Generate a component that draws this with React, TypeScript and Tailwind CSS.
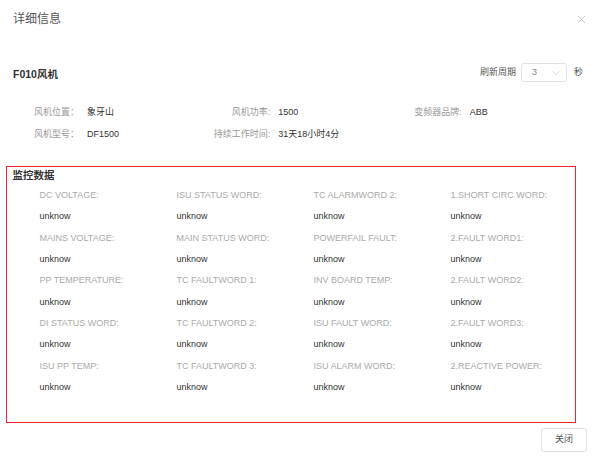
import { ChevronDown, X } from "lucide-react";

const FONT = "font-['Liberation_Sans','Noto_Sans_CJK_SC',sans-serif]";

const BASE_INFO = [
  [
    { label: "风机位置：", value: "象牙山" },
    { label: "风机功率:", value: "1500" },
    { label: "变频器品牌:", value: "ABB" },
  ],
  [
    { label: "风机型号：", value: "DF1500" },
    { label: "持续工作时间:", value: "31天18小时4分" },
    { label: "", value: "" },
  ],
];

const MONITOR_FIELDS = [
  "DC VOLTAGE:",
  "ISU STATUS WORD:",
  "TC ALARMWORD 2:",
  "1.SHORT CIRC WORD:",
  "MAINS VOLTAGE:",
  "MAIN STATUS WORD:",
  "POWERFAIL FAULT:",
  "2.FAULT WORD1:",
  "PP TEMPERATURE:",
  "TC FAULTWORD 1:",
  "INV BOARD TEMP:",
  "2.FAULT WORD2:",
  "DI STATUS WORD:",
  "TC FAULTWORD 2:",
  "ISU FAULT WORD:",
  "2.FAULT WORD3:",
  "ISU PP TEMP:",
  "TC FAULTWORD 3:",
  "ISU ALARM WORD:",
  "2.REACTIVE POWER:",
];

export default function App() {
  return (
    <div className={`${FONT} w-[600px] h-[463px] bg-white flex flex-col text-[#333]`}>
      {/* Header */}
      <div className="h-[38px] flex items-center justify-between pl-[13px] pr-[12px]">
        <span className="text-[12px] leading-none text-[#555]">详细信息</span>
        <X size={13} strokeWidth={1.2} className="text-[#aaa]" />
      </div>

      {/* Fan name + refresh period */}
      <div className="mt-[25px] h-[19px] flex items-center justify-between pl-[13px] pr-[17px]">
        <span className="text-[10.5px] font-bold leading-none mt-[3px]">F010风机</span>
        <div className="flex items-center text-[9px] text-[#555]">
          <span>刷新周期</span>
          <div className="ml-[5px] w-[46px] h-[19px] border border-[#e3e3e3] rounded-[3px] flex items-center justify-between pl-[10px] pr-[4px]">
            <span className="text-[#888]">3</span>
            <ChevronDown size={12} strokeWidth={1.2} className="text-[#bbb]" />
          </div>
          <span className="ml-[7px]">秒</span>
        </div>
      </div>

      {/* Base info */}
      <div className="mt-[20px] mx-[13px] grid grid-cols-3 text-[9px]">
        {BASE_INFO.flat().map((item, i) => (
          <div key={i} className="h-[22px] flex items-center">
            <span className="w-[66px] shrink-0 text-right text-[#999] whitespace-nowrap">{item.label}</span>
            <span className="ml-[8px] whitespace-nowrap">{item.value}</span>
          </div>
        ))}
      </div>

      {/* Monitor data */}
      <div className="mt-[20px] ml-[6px] w-[570px] h-[257px] border-[1.5px] border-[#f5222d] pl-[5.5px]">
        <div className="h-[16px] flex items-center text-[10.5px] font-bold leading-none">监控数据</div>
        <div className="mt-[2px] ml-[27px] grid grid-cols-[137px_137px_137px_137px] text-[9px]">
          {MONITOR_FIELDS.map((f) => (
            <div key={f} className="leading-[21.33px] whitespace-nowrap">
              <div className="text-[#aaa]">{f}</div>
              <div>unknow</div>
            </div>
          ))}
        </div>
      </div>

      {/* Footer */}
      <div className="mt-[5px] flex justify-end pr-[13px]">
        <button className="w-[46px] h-[24px] border border-[#e3e3e3] rounded-[3px] text-[9px] text-[#555] bg-white">
          关闭
        </button>
      </div>
    </div>
  );
}
